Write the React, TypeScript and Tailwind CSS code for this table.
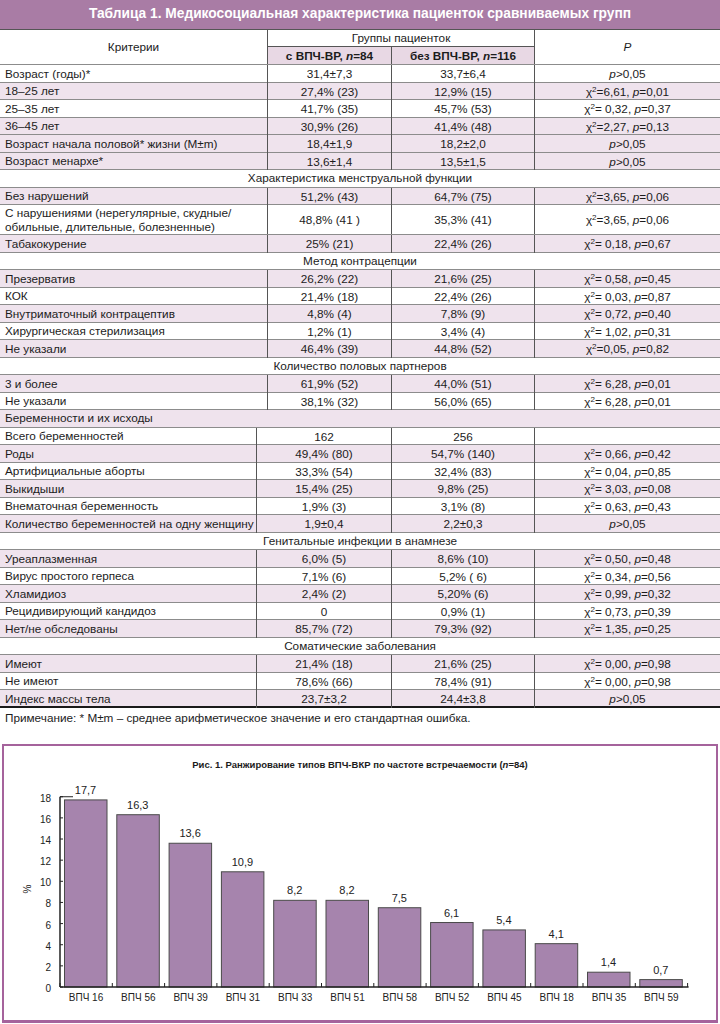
import React from 'react';

type PVal = { chi?: string; p: string } | null;

interface Row {
  label: React.ReactNode;
  a: string;
  b: string;
  p: PVal;
  pink: boolean;
  tall?: boolean;
}

type Item = Row | { section: string; left?: boolean; pink?: boolean };

const topRows: Item[] = [
  { label: 'Возраст (годы)*', a: '31,4±7,3', b: '33,7±6,4', p: { p: '>0,05' }, pink: false },
  { label: '18–25 лет', a: '27,4% (23)', b: '12,9% (15)', p: { chi: '=6,61', p: '=0,01' }, pink: true },
  { label: '25–35 лет', a: '41,7% (35)', b: '45,7% (53)', p: { chi: '= 0,32', p: '=0,37' }, pink: false },
  { label: '36–45 лет', a: '30,9% (26)', b: '41,4% (48)', p: { chi: '=2,27', p: '=0,13' }, pink: true },
  { label: 'Возраст начала половой* жизни (M±m)', a: '18,4±1,9', b: '18,2±2,0', p: { p: '>0,05' }, pink: true },
  { label: 'Возраст менархе*', a: '13,6±1,4', b: '13,5±1,5', p: { p: '>0,05' }, pink: true },
  { section: 'Характеристика менструальной функции' },
  { label: 'Без нарушений', a: '51,2% (43)', b: '64,7% (75)', p: { chi: '=3,65', p: '=0,06' }, pink: true },
  {
    label: (
      <>
        С нарушениями (нерегулярные, скудные/
        <br />
        обильные, длительные, болезненные)
      </>
    ),
    a: '48,8% (41 )',
    b: '35,3% (41)',
    p: { chi: '=3,65', p: '=0,06' },
    pink: false,
    tall: true,
  },
  { label: 'Табакокурение', a: '25% (21)', b: '22,4% (26)', p: { chi: '= 0,18', p: '=0,67' }, pink: true },
  { section: 'Метод контрацепции' },
  { label: 'Презерватив', a: '26,2% (22)', b: '21,6% (25)', p: { chi: '= 0,58', p: '=0,45' }, pink: true },
  { label: 'КОК', a: '21,4% (18)', b: '22,4% (26)', p: { chi: '= 0,03', p: '=0,87' }, pink: false },
  { label: 'Внутриматочный контрацептив', a: '4,8% (4)', b: '7,8% (9)', p: { chi: '= 0,72', p: '=0,40' }, pink: true },
  { label: 'Хирургическая стерилизация', a: '1,2% (1)', b: '3,4% (4)', p: { chi: '= 1,02', p: '=0,31' }, pink: false },
  { label: 'Не указали', a: '46,4% (39)', b: '44,8% (52)', p: { chi: '=0,05', p: '=0,82' }, pink: true },
  { section: 'Количество половых партнеров' },
  { label: '3 и более', a: '61,9% (52)', b: '44,0% (51)', p: { chi: '= 6,28', p: '=0,01' }, pink: true },
  { label: 'Не указали', a: '38,1% (32)', b: '56,0% (65)', p: { chi: '= 6,28', p: '=0,01' }, pink: false },
];

const bottomRows: Item[] = [
  { section: 'Беременности и их исходы', left: true, pink: true },
  { label: 'Всего беременностей', a: '162', b: '256', p: null, pink: false },
  { label: 'Роды', a: '49,4% (80)', b: '54,7% (140)', p: { chi: '= 0,66', p: '=0,42' }, pink: true },
  { label: 'Артифициальные аборты', a: '33,3% (54)', b: '32,4% (83)', p: { chi: '= 0,04', p: '=0,85' }, pink: false },
  { label: 'Выкидыши', a: '15,4% (25)', b: '9,8% (25)', p: { chi: '= 3,03', p: '=0,08' }, pink: true },
  { label: 'Внематочная беременность', a: '1,9% (3)', b: '3,1% (8)', p: { chi: '= 0,63', p: '=0,43' }, pink: false },
  { label: 'Количество беременностей на одну женщину', a: '1,9±0,4', b: '2,2±0,3', p: { p: '>0,05' }, pink: true },
  { section: 'Генитальные инфекции в анамнезе' },
  { label: 'Уреаплазменная', a: '6,0% (5)', b: '8,6% (10)', p: { chi: '= 0,50', p: '=0,48' }, pink: true },
  { label: 'Вирус простого герпеса', a: '7,1% (6)', b: '5,2% ( 6)', p: { chi: '= 0,34', p: '=0,56' }, pink: false },
  { label: 'Хламидиоз', a: '2,4% (2)', b: '5,20% (6)', p: { chi: '= 0,99', p: '=0,32' }, pink: true },
  { label: 'Рецидивирующий кандидоз', a: '0', b: '0,9% (1)', p: { chi: '= 0,73', p: '=0,39' }, pink: false },
  { label: 'Нет/не обследованы', a: '85,7% (72)', b: '79,3% (92)', p: { chi: '= 1,35', p: '=0,25' }, pink: true },
  { section: 'Соматические заболевания' },
  { label: 'Имеют', a: '21,4% (18)', b: '21,6% (25)', p: { chi: '= 0,00', p: '=0,98' }, pink: true },
  { label: 'Не имеют', a: '78,6% (66)', b: '78,4% (91)', p: { chi: '= 0,00', p: '=0,98' }, pink: false },
  { label: 'Индекс массы тела', a: '23,7±3,2', b: '24,4±3,8', p: { p: '>0,05' }, pink: true },
];

const PText = ({ v }: { v: PVal }) => {
  if (!v) return null;
  return (
    <span>
      {v.chi !== undefined && (
        <>
          χ<sup className="text-[8px]">2</sup>
          {v.chi},{' '}
        </>
      )}
      <i>p</i>
      {v.p}
    </span>
  );
};

const Rows = ({ items, cols, closing }: { items: Item[]; cols: string; closing?: boolean }) => (
  <>
    {items.map((it, i) => {
      const last = closing && i === items.length - 1;
      if ('section' in it) {
        return (
          <div
            key={i}
            className={`h-[17.5px] border-b border-[#8c8c8c] flex items-center ${
              it.left ? 'justify-start pl-[5px]' : 'justify-center'
            } ${it.pink ? 'bg-[#efe3ed]' : 'bg-white'}`}
          >
            {it.section}
          </div>
        );
      }
      return (
        <div
          key={i}
          className={`grid ${cols} ${it.tall ? 'h-[30px]' : 'h-[17.5px]'} ${
            last ? 'border-b-2 border-[#1a1a1a]' : 'border-b border-[#8c8c8c]'
          } ${it.pink ? 'bg-[#efe3ed]' : 'bg-white'}`}
        >
          <div className="pl-[5px] flex items-center leading-[14px] border-r-[1.5px] border-[#555]">{it.label}</div>
          <div className="flex items-center justify-center border-r-[1.5px] border-[#555]">{it.a}</div>
          <div className="flex items-center justify-center border-r-[1.5px] border-[#555]">{it.b}</div>
          <div className="flex items-center justify-center">
            <PText v={it.p} />
          </div>
        </div>
      );
    })}
  </>
);

const bars: [string, number, string][] = [
  ['ВПЧ 16', 17.7, '17,7'],
  ['ВПЧ 56', 16.3, '16,3'],
  ['ВПЧ 39', 13.6, '13,6'],
  ['ВПЧ 31', 10.9, '10,9'],
  ['ВПЧ 33', 8.2, '8,2'],
  ['ВПЧ 51', 8.2, '8,2'],
  ['ВПЧ 58', 7.5, '7,5'],
  ['ВПЧ 52', 6.1, '6,1'],
  ['ВПЧ 45', 5.4, '5,4'],
  ['ВПЧ 18', 4.1, '4,1'],
  ['ВПЧ 35', 1.4, '1,4'],
  ['ВПЧ 59', 0.7, '0,7'],
];

const X0 = 60;
const STEP = 52.3;
const Y0 = 986;
const K = 10.57;

const Chart = () => (
  <svg
    width="712"
    height="242"
    viewBox="4 777 712 242"
    className="block"
    fontFamily="'Liberation Sans', Arial, sans-serif"
    fill="#222"
  >
    {/* y axis */}
    <line x1={X0} y1={Y0 - 18 * K} x2={X0} y2={Y0} stroke="#222" strokeWidth="1.5" />
    <line x1={X0} y1={Y0 - 18 * K} x2={X0 + 13} y2={Y0 - 18 * K} stroke="#222" strokeWidth="1" />
    {Array.from({ length: 10 }, (_, i) => i * 2).map((v) => (
      <g key={v}>
        <line x1={X0} y1={Y0 - v * K} x2={X0 + 3} y2={Y0 - v * K} stroke="#222" strokeWidth="1" />
        <text x={51} y={Y0 - v * K + 5} textAnchor="end" fontSize="10">
          {v}
        </text>
      </g>
    ))}
    <text x={31} y={888} fontSize="10" textAnchor="middle" transform="rotate(-90 31 888)">
      %
    </text>
    {/* bars */}
    {bars.map(([name, v, lbl], i) => {
      const x = X0 + STEP * i + 4.5;
      const top = Y0 - v * K;
      return (
        <g key={name}>
          <rect x={x} y={top} width={42.5} height={v * K} fill="#a684ad" stroke="#4a4a4a" strokeWidth="1" />
          <text x={x + 21} y={top - 6} textAnchor="middle" fontSize="11">
            {lbl}
          </text>
          <text x={X0 + STEP * i + 26} y={1000} textAnchor="middle" fontSize="10">
            {name}
          </text>
        </g>
      );
    })}
    {/* x axis */}
    <line x1={X0} y1={Y0} x2={X0 + STEP * 12 + 1} y2={Y0} stroke="#222" strokeWidth="1.5" />
    {Array.from({ length: 13 }, (_, i) => i).map((i) => (
      <line key={i} x1={X0 + STEP * i} y1={Y0} x2={X0 + STEP * i} y2={Y0 - 4} stroke="#222" strokeWidth="1" />
    ))}
  </svg>
);

export default function App() {
  const topCols = 'grid-cols-[268px_124px_143px_1fr]';
  const bottomCols = 'grid-cols-[257px_135px_143px_1fr]';
  return (
    <div className="w-[720px] h-[1024px] bg-white text-[#1c1c1c] text-[11.75px] font-['Liberation_Sans',Arial,sans-serif]">
      <div className="h-[30px] bg-[#a97ca5] text-white font-bold text-[13.75px] flex items-center justify-center border-b border-[#555]">
        Таблица 1. Медикосоциальная характеристика пациенток сравниваемых групп
      </div>
      <div className={`grid ${topCols} grid-rows-[17px_17px] border-b border-[#8c8c8c]`}>
        <div className="row-span-2 flex items-center justify-center border-r-[1.5px] border-[#555]">Критерии</div>
        <div className="col-span-2 flex items-center justify-center border-r-[1.5px] border-b border-[#555]">
          Группы пациенток
        </div>
        <div className="row-span-2 flex items-center justify-center italic">P</div>
        <div className="flex items-center justify-center font-bold bg-[#e8d8e4] border-r-[1.5px] border-[#555]">
          с ВПЧ-ВР,&nbsp;<i>n</i>=84
        </div>
        <div className="flex items-center justify-center font-bold bg-[#e8d8e4] border-r-[1.5px] border-[#555]">
          без ВПЧ-ВР,&nbsp;<i>n</i>=116
        </div>
      </div>
      <Rows items={topRows} cols={topCols} />
      <Rows items={bottomRows} cols={bottomCols} closing />
      <div className="h-[20px] pl-[5px] flex items-center">
        Примечание: * M±m – среднее арифметическое значение и его стандартная ошибка.
      </div>
      <div className="mx-[2px] mt-[16px] h-[279px] border-2 border-b-[3px] border-[#a5639c]">
        <div className="h-[32px] pt-[13px] text-center font-bold text-[9.5px] leading-[12px]">
          Рис. 1. Ранжирование типов ВПЧ-ВКР по частоте встречаемости (<i>n</i>=84)
        </div>
        <Chart />
      </div>
    </div>
  );
}
